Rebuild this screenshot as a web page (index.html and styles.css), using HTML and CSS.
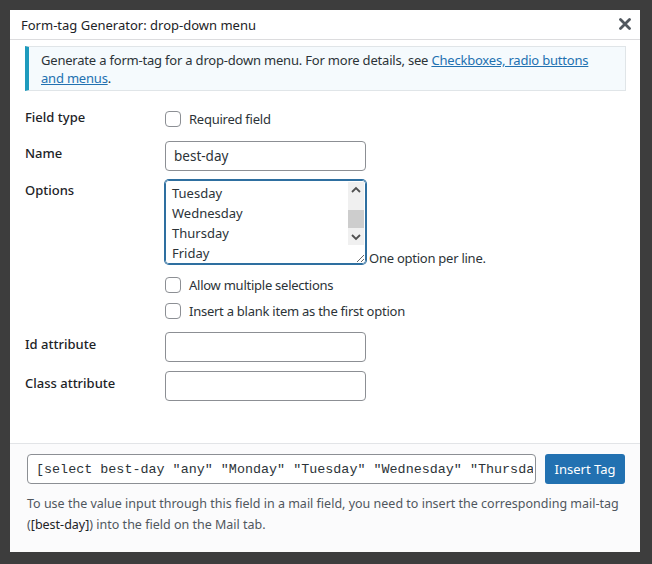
FILE: index.html
```html
<!DOCTYPE html>
<html lang="en">
  <head>
    <title>Form-tag Generator</title>
    <meta charset="UTF-8" />
    <link rel="stylesheet" href="styles.css">
  </head>
  <body>
    <div class="modal">
      <div class="modal__header">
        <span class="modal__header__title">Form-tag Generator: drop-down menu</span>
        <svg class="modal__header__close" width="12" height="12" viewBox="0 0 12 12">
          <path d="M1.5 1.5 L10.5 10.5 M10.5 1.5 L1.5 10.5" stroke="#50575e" stroke-width="2.8" stroke-linecap="round" />
        </svg>
      </div>

      <div class="modal__body">
        <div class="notice">
          Generate a form-tag for a drop-down menu. For more details, see <a href="#">Checkboxes, radio buttons and menus</a>.
        </div>

        <div class="form">
          <div class="form__row form__row--first">
            <div class="form__label">Field type</div>
            <div class="form__control">
              <label class="check"><input type="checkbox" /> Required field</label>
            </div>
          </div>

          <div class="form__row">
            <div class="form__label form__label--input">Name</div>
            <div class="form__control">
              <input class="text-input" type="text" value="best-day" />
            </div>
          </div>

          <div class="form__row form__row--options">
            <div class="form__label">Options</div>
            <div class="form__control">
              <div class="options">
                <div class="options__field">
                  <textarea id="options" class="options__area">Monday
Tuesday
Wednesday
Thursday
Friday</textarea>
                  <!-- headless chrome hides scrollbars, so draw one -->
                  <div class="scrollbar">
                    <svg class="scrollbar__arrow" width="16" height="16" viewBox="0 0 16 16">
                      <path d="M4 10 L8 6 L12 10" fill="none" stroke="#505050" stroke-width="1.8" />
                    </svg>
                    <div class="scrollbar__track"><div class="scrollbar__thumb"></div></div>
                    <svg class="scrollbar__arrow" width="16" height="16" viewBox="0 0 16 16">
                      <path d="M4 6 L8 10 L12 6" fill="none" stroke="#505050" stroke-width="1.8" />
                    </svg>
                  </div>
                </div>
                <span class="options__hint">One option per line.</span>
              </div>
              <label class="check check--stack"><input type="checkbox" /> Allow multiple selections</label>
              <label class="check check--stack"><input type="checkbox" /> Insert a blank item as the first option</label>
            </div>
          </div>

          <div class="form__row form__row--id">
            <div class="form__label form__label--input">Id attribute</div>
            <div class="form__control">
              <input class="text-input" type="text" />
            </div>
          </div>

          <div class="form__row form__row--class">
            <div class="form__label form__label--input">Class attribute</div>
            <div class="form__control">
              <input class="text-input" type="text" />
            </div>
          </div>
        </div>
      </div>

      <div class="modal__footer">
        <div class="modal__footer__insert">
          <input class="code-input" type="text" readonly value='[select best-day "any" "Monday" "Tuesday" "Wednesday" "Thursday" "Friday"]' />
          <button class="button-primary">Insert Tag</button>
        </div>
        <p class="modal__footer__note">
          To use the value input through this field in a mail field, you need to insert the corresponding mail-tag
          (<strong>[best-day]</strong>) into the field on the Mail tab.
        </p>
      </div>
    </div>
    <script src="script.js"></script>
  </body>
</html>
```

FILE: styles.css
```css
body {
  margin: 0;
  background: #3d3d3d;
  font-family: 'Noto Sans', 'Open Sans', Arial, sans-serif;
  font-size: 13px;
  color: #2c3338;
}

.modal {
  display: flex;
  flex-direction: column;
  width: 630px;
  height: 542px;
  margin: 10px 0 0 10px;
  background: #ffffff;
}

.modal__header {
  display: flex;
  justify-content: space-between;
  align-items: center;
  height: 29px;
  padding: 0 9px 0 11px;
  border-bottom: 1px solid #dcdcde;
}

.modal__header__title {
  font-size: 13px;
  color: #1d2327;
}

.modal__header__close {
  margin-top: -2px;
}

.modal__body {
  flex: 1;
  padding: 6px 14px 0 15px;
}

.notice {
  padding: 4px 12px 3px 12px;
  border: 1px solid #e0e5e8;
  border-left: 4px solid #1e9bbd;
  background: #f5fafd;
  line-height: 18px;
  letter-spacing: -0.2px;
  color: #2c3338;
}

.notice a {
  color: #2271b1;
}

.form__row {
  display: flex;
  align-items: flex-start;
  margin-top: 12px;
}

.form__row--first {
  margin-top: 16px;
}

.form__row--options {
  margin-top: 9px;
}

.form__row--id {
  margin-top: 11px;
}

.form__row--class {
  margin-top: 9px;
}

.form__label {
  width: 140px;
  flex-shrink: 0;
  line-height: 20px;
  font-weight: 500;
  color: #1d2327;
}

.form__label--input {
  padding-top: 2px;
}

.form__control {
  display: flex;
  flex-direction: column;
  align-items: flex-start;
}

.check {
  display: flex;
  align-items: center;
  height: 20px;
  margin-top: 2px;
  letter-spacing: -0.25px;
  color: #2c3338;
}

.check--stack {
  margin-top: 3px;
}

.check--stack + .check--stack {
  margin-top: 6px;
}

.check input {
  appearance: none;
  width: 16px;
  height: 16px;
  margin: 0 8px 0 0;
  border: 1px solid #8c8f94;
  border-radius: 4px;
  background: #ffffff;
}

.text-input {
  box-sizing: border-box;
  width: 201px;
  height: 30px;
  padding: 0 8px;
  border: 1px solid #8c8f94;
  border-radius: 4px;
  font-family: 'Noto Sans', 'Open Sans', Arial, sans-serif;
  font-size: 13.5px;
  color: #2c3338;
}

.options {
  display: flex;
  align-items: flex-end;
  margin-bottom: 8px;
}

.options__field {
  position: relative;
  display: flex;
}

.options__area {
  box-sizing: border-box;
  width: 201px;
  height: 84px;
  padding: 2px 20px 0 6px;
  border: 1px solid #2e6fa0;
  border-radius: 4px;
  box-shadow: 0 0 0 1px #2e6fa0;
  font-family: 'Noto Sans', 'Open Sans', Arial, sans-serif;
  font-size: 13px;
  line-height: 20px;
  color: #2c3338;
  outline: none;
  overflow-y: scroll;
}

.scrollbar {
  position: absolute;
  top: 2px;
  right: 2px;
  display: flex;
  flex-direction: column;
  width: 16px;
  height: 63px;
  background: #f0f0f0;
}

.scrollbar__arrow {
  display: block;
  flex-shrink: 0;
}

.scrollbar__track {
  flex: 1;
  padding-top: 12px;
}

.scrollbar__thumb {
  height: 18px;
  background: #cdcdcd;
}

.options__hint {
  margin: 0 0 -3px 3px;
  line-height: 18px;
  letter-spacing: -0.25px;
  color: #2c3338;
}

.modal__footer {
  height: 109px;
  box-sizing: border-box;
  padding: 10px 15px 0 17px;
  border-top: 1px solid #e2e4e7;
  background: #fbfbfc;
}

.modal__footer__insert {
  display: flex;
  gap: 9px;
}

.code-input {
  box-sizing: border-box;
  width: 509px;
  height: 30px;
  padding: 0 2px 0 8px;
  border: 1px solid #8c8f94;
  border-radius: 4px;
  background: #ffffff;
  font-family: 'Liberation Mono', 'DejaVu Sans Mono', monospace;
  font-size: 13.4px;
  color: #2c3338;
}

.button-primary {
  width: 80px;
  height: 30px;
  border: none;
  border-radius: 3px;
  background: #2271b1;
  color: #ffffff;
  font-family: 'Noto Sans', 'Open Sans', Arial, sans-serif;
  font-size: 13px;
}

.modal__footer__note {
  margin: 9px 0 0 0;
  font-size: 12.5px;
  line-height: 21px;
  color: #50575e;
}

.modal__footer__note strong {
  font-weight: 400;
  color: #1d2327;
}
```

FILE: script.js
```js
var area = document.getElementById('options');
area.scrollTop = area.scrollHeight;
```
